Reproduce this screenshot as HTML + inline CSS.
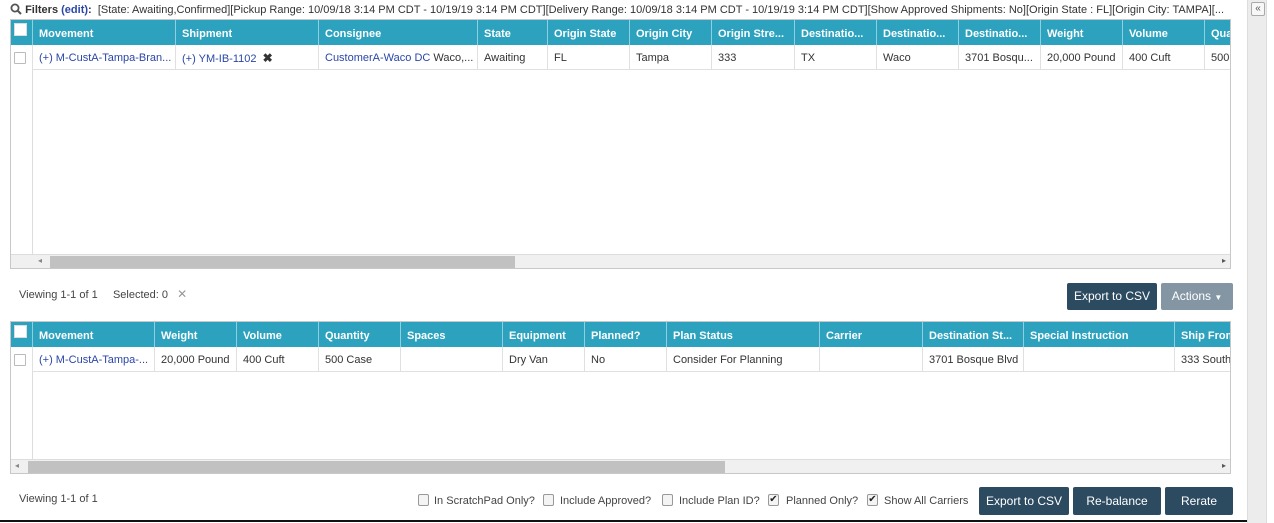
<!DOCTYPE html>
<html><head><meta charset="utf-8"><style>
*{box-sizing:border-box;margin:0;padding:0}
body{width:1274px;height:523px;position:relative;overflow:hidden;background:#fff;font-family:"Liberation Sans",sans-serif;font-size:11px;color:#333}
.abs{position:absolute}
.grid{position:absolute;left:10px;width:1221px;border:1px solid #c8c8c8;overflow:hidden;background:#fff}
.hdr{position:absolute;left:0;top:0;height:25px;width:100%;background:#2ca2bf}
.c{position:absolute;top:0;height:25px;line-height:28px;color:#fff;font-weight:bold;font-size:11px;padding-left:6px;border-left:1px solid #8fd0e0;white-space:nowrap;overflow:hidden}
.d{position:absolute;height:25px;line-height:26px;font-size:11px;padding-left:6px;border-left:1px solid #e0e0e0;border-bottom:1px solid #e0e0e0;white-space:nowrap;overflow:hidden;color:#333}
a{color:#2a46a8;text-decoration:none}
.cb{position:absolute;width:12px;height:12px;border:1px solid #bbb;background:#fff;border-radius:1px}
.hcb{position:absolute;width:13px;height:13px;background:#fff;border:1px solid #ddd}
.sb{position:absolute;left:0;width:100%;height:14px;background:#f0f0f0;border-top:1px solid #ddd}
.thumb{position:absolute;top:1px;height:12px;background:#c1c1c1}
.btn{position:absolute;height:27px;line-height:27px;color:#fff;background:#2d4b60;text-align:center;font-size:12px;border-radius:2px}
.lbl{position:absolute;font-size:11px;color:#444;line-height:14px}
.ck{position:absolute;width:11px;height:12px;border:1px solid #999;border-radius:2px;background:#f4f4f4;font-size:10px;line-height:10px;text-align:center;color:#222}
</style></head><body>

<div class="abs" style="left:10px;top:3px;font-size:11px;line-height:14px;white-space:nowrap">
<svg width="12" height="12" viewBox="0 0 12 12" style="vertical-align:-2px"><circle cx="5" cy="5" r="3.6" fill="none" stroke="#555" stroke-width="1.8"/><path d="M7.5 7.5L11 11" stroke="#555" stroke-width="2"/></svg>
<b>Filters</b> <b style="color:#2a46a8">(edit)</b><b>:</b>&nbsp; [State: Awaiting,Confirmed][Pickup Range: 10/09/18 3:14 PM CDT - 10/19/19 3:14 PM CDT][Delivery Range: 10/09/18 3:14 PM CDT - 10/19/19 3:14 PM CDT][Show Approved Shipments: No][Origin State : FL][Origin City: TAMPA][...</div>

<div class="abs" style="left:1247px;top:0;width:20px;height:523px;background:#ececec;border-left:1px solid #ddd;border-right:1px solid #ddd"></div>
<div class="abs" style="left:1251px;top:2px;width:14px;height:14px;border:1px solid #aaa;border-radius:2px;background:#f7f7f7;font-size:10px;line-height:11px;text-align:center;color:#555">«</div>

<!-- grid 1 -->
<div class="grid" style="top:19px;height:250px">
 <div class="hdr"></div>
 <div class="hcb" style="left:3px;top:3px"></div>
 <div class="c" style="left:21px;width:143px">Movement</div>
 <div class="c" style="left:164px;width:143px">Shipment</div>
 <div class="c" style="left:307px;width:159px">Consignee</div>
 <div class="c" style="left:466px;width:70px">State</div>
 <div class="c" style="left:536px;width:82px">Origin State</div>
 <div class="c" style="left:618px;width:82px">Origin City</div>
 <div class="c" style="left:700px;width:83px">Origin Stre...</div>
 <div class="c" style="left:783px;width:82px">Destinatio...</div>
 <div class="c" style="left:865px;width:82px">Destinatio...</div>
 <div class="c" style="left:947px;width:82px">Destinatio...</div>
 <div class="c" style="left:1029px;width:82px">Weight</div>
 <div class="c" style="left:1111px;width:82px">Volume</div>
 <div class="c" style="left:1193px;width:30px">Qua</div>
 <div class="abs" style="left:21px;top:25px;width:1px;height:210px;background:#ddd"></div>
 <div class="cb" style="left:3px;top:32px"></div>
 <div class="d" style="left:21px;top:25px;width:143px"><a>(+) M-CustA-Tampa-Bran...</a></div>
 <div class="d" style="left:164px;top:25px;width:143px"><a>(+) YM-IB-1102</a> &nbsp;<b style="font-size:12px">✖</b></div>
 <div class="d" style="left:307px;top:25px;width:159px"><a>CustomerA-Waco DC</a> Waco,...</div>
 <div class="d" style="left:466px;top:25px;width:70px">Awaiting</div>
 <div class="d" style="left:536px;top:25px;width:82px">FL</div>
 <div class="d" style="left:618px;top:25px;width:82px">Tampa</div>
 <div class="d" style="left:700px;top:25px;width:83px">333</div>
 <div class="d" style="left:783px;top:25px;width:82px">TX</div>
 <div class="d" style="left:865px;top:25px;width:82px">Waco</div>
 <div class="d" style="left:947px;top:25px;width:82px">3701 Bosqu...</div>
 <div class="d" style="left:1029px;top:25px;width:82px">20,000 Pound</div>
 <div class="d" style="left:1111px;top:25px;width:82px">400 Cuft</div>
 <div class="d" style="left:1193px;top:25px;width:30px">500</div>
 <div class="sb" style="top:234px"><div class="thumb" style="left:39px;width:465px"></div><span class="abs" style="left:27px;top:1px;font-size:8px;color:#888">◂</span><span class="abs" style="right:4px;top:1px;font-size:8px;color:#555">▸</span></div>
</div>

<div class="lbl" style="left:19px;top:287px">Viewing 1-1 of 1 &nbsp;&nbsp;&nbsp; Selected: 0 &nbsp;&nbsp;<span style="color:#999;font-size:12px">✕</span></div>
<div class="btn" style="left:1067px;top:283px;width:90px">Export to CSV</div>
<div class="btn" style="left:1161px;top:283px;width:72px;background:#8496a3">Actions <span style="font-size:8px">▼</span></div>

<!-- grid 2 -->
<div class="grid" style="top:321px;height:153px">
 <div class="hdr"></div>
 <div class="hcb" style="left:3px;top:3px"></div>
 <div class="c" style="left:21px;width:122px">Movement</div>
 <div class="c" style="left:143px;width:82px">Weight</div>
 <div class="c" style="left:225px;width:82px">Volume</div>
 <div class="c" style="left:307px;width:82px">Quantity</div>
 <div class="c" style="left:389px;width:102px">Spaces</div>
 <div class="c" style="left:491px;width:82px">Equipment</div>
 <div class="c" style="left:573px;width:82px">Planned?</div>
 <div class="c" style="left:655px;width:153px">Plan Status</div>
 <div class="c" style="left:808px;width:103px">Carrier</div>
 <div class="c" style="left:911px;width:101px">Destination St...</div>
 <div class="c" style="left:1012px;width:151px">Special Instruction</div>
 <div class="c" style="left:1163px;width:60px">Ship From</div>
 <div class="abs" style="left:21px;top:25px;width:1px;height:113px;background:#ddd"></div>
 <div class="cb" style="left:3px;top:32px"></div>
 <div class="d" style="left:21px;top:25px;width:122px"><a>(+) M-CustA-Tampa-...</a></div>
 <div class="d" style="left:143px;top:25px;width:82px">20,000 Pound</div>
 <div class="d" style="left:225px;top:25px;width:82px">400 Cuft</div>
 <div class="d" style="left:307px;top:25px;width:82px">500 Case</div>
 <div class="d" style="left:389px;top:25px;width:102px"></div>
 <div class="d" style="left:491px;top:25px;width:82px">Dry Van</div>
 <div class="d" style="left:573px;top:25px;width:82px">No</div>
 <div class="d" style="left:655px;top:25px;width:153px">Consider For Planning</div>
 <div class="d" style="left:808px;top:25px;width:103px"></div>
 <div class="d" style="left:911px;top:25px;width:101px">3701 Bosque Blvd</div>
 <div class="d" style="left:1012px;top:25px;width:151px"></div>
 <div class="d" style="left:1163px;top:25px;width:60px">333 South</div>
 <div class="sb" style="top:137px"><div class="thumb" style="left:17px;width:697px"></div><span class="abs" style="left:4px;top:1px;font-size:8px;color:#888">◂</span><span class="abs" style="right:4px;top:1px;font-size:8px;color:#555">▸</span></div>
</div>

<div class="lbl" style="left:19px;top:492px">Viewing 1-1 of 1</div>
<div class="ck" style="left:418px;top:494px"></div><div class="lbl" style="left:434px;top:494px">In ScratchPad Only?</div>
<div class="ck" style="left:543px;top:494px"></div><div class="lbl" style="left:560px;top:494px">Include Approved?</div>
<div class="ck" style="left:662px;top:494px"></div><div class="lbl" style="left:679px;top:494px">Include Plan ID?</div>
<div class="ck" style="left:768px;top:494px">✔</div><div class="lbl" style="left:786px;top:494px">Planned Only?</div>
<div class="ck" style="left:867px;top:494px">✔</div><div class="lbl" style="left:884px;top:494px">Show All Carriers</div>
<div class="btn" style="left:979px;top:487px;width:90px;height:28px;line-height:28px">Export to CSV</div>
<div class="btn" style="left:1073px;top:487px;width:88px;height:28px;line-height:28px">Re-balance</div>
<div class="btn" style="left:1165px;top:487px;width:68px;height:28px;line-height:28px">Rerate</div>

<div class="abs" style="left:0;top:520px;width:1247px;height:2px;background:#111"></div>
</body></html>
